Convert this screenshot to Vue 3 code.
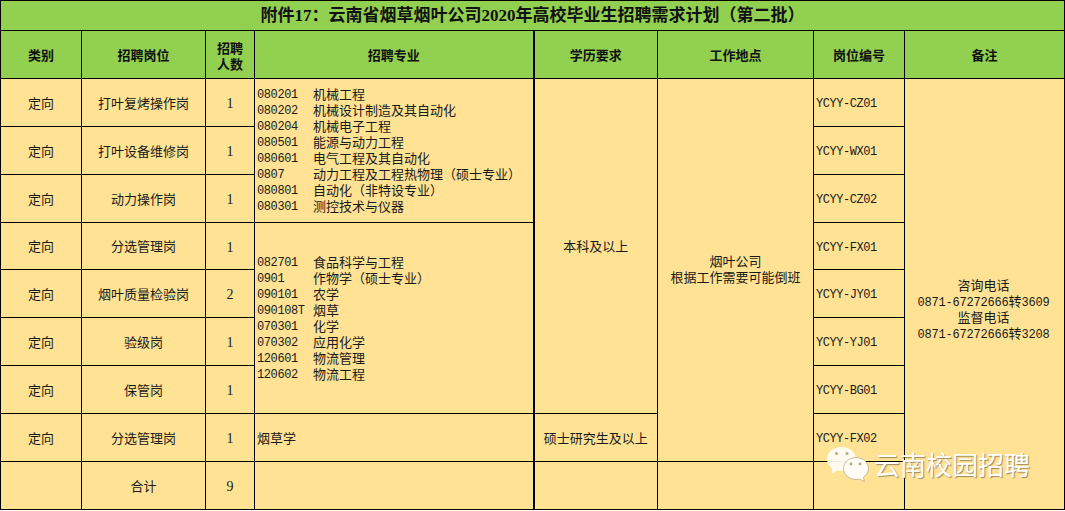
<script setup>
const rows = [
  { pos: '打叶复烤操作岗', n: '1', code: 'YCYY-CZ01' },
  { pos: '打叶设备维修岗', n: '1', code: 'YCYY-WX01' },
  { pos: '动力操作岗', n: '1', code: 'YCYY-CZ02' },
  { pos: '分选管理岗', n: '1', code: 'YCYY-FX01' },
  { pos: '烟叶质量检验岗', n: '2', code: 'YCYY-JY01' },
  { pos: '验级岗', n: '1', code: 'YCYY-YJ01' },
  { pos: '保管岗', n: '1', code: 'YCYY-BG01' },
  { pos: '分选管理岗', n: '1', code: 'YCYY-FX02' }
]
const heights = [48, 48, 48, 47, 48, 48, 48, 48]
const majorsA = [
  ['080201', '机械工程'], ['080202', '机械设计制造及其自动化'], ['080204', '机械电子工程'],
  ['080501', '能源与动力工程'], ['080601', '电气工程及其自动化'], ['0807', '动力工程及工程热物理（硕士专业）'],
  ['080801', '自动化（非特设专业）'], ['080301', '测控技术与仪器']
]
const majorsB = [
  ['082701', '食品科学与工程'], ['0901', '作物学（硕士专业）'], ['090101', '农学'], ['090108T', '烟草'],
  ['070301', '化学'], ['070302', '应用化学'], ['120601', '物流管理'], ['120602', '物流工程']
]
const cols = [81, 124, 49, 279, 124, 156, 91, 160]
</script>

<template>
  <div class="page">
    <table class="plan">
      <colgroup><col v-for="(w, i) in cols" :key="i" :style="{ width: w + 'px' }" /></colgroup>
      <tbody>
        <tr class="title-row"><th colspan="8" class="title">附件17：云南省烟草烟叶公司2020年高校毕业生招聘需求计划（第二批）</th></tr>
        <tr class="head-row">
          <th>类别</th><th>招聘岗位</th><th class="two">招聘<br />人数</th><th>招聘专业</th>
          <th class="thick">学历要求</th><th>工作地点</th><th>岗位编号</th><th>备注</th>
        </tr>
        <tr v-for="(r, i) in rows" :key="r.code" :style="{ height: heights[i] + 'px' }">
          <td>定向</td>
          <td>{{ r.pos }}</td>
          <td class="num">{{ r.n }}</td>
          <td v-if="i === 0" rowspan="3" class="majors first">
            <div v-for="m in majorsA" :key="m[0]" class="major"><span class="mcode">{{ m[0] }}</span><span>{{ m[1] }}</span></div>
          </td>
          <td v-else-if="i === 3" rowspan="4" class="majors">
            <div v-for="m in majorsB" :key="m[0]" class="major"><span class="mcode">{{ m[0] }}</span><span>{{ m[1] }}</span></div>
          </td>
          <td v-else-if="i === 7" class="left">烟草学</td>
          <td v-if="i === 0" rowspan="7" class="thick">本科及以上</td>
          <td v-else-if="i === 7" class="thick">硕士研究生及以上</td>
          <td v-if="i === 0" rowspan="8" class="place">烟叶公司<br />根据工作需要可能倒班</td>
          <td class="code">{{ r.code }}</td>
          <td v-if="i === 0" rowspan="9" class="note">
            <div>咨询电话</div>
            <div class="phone"><span class="mono">0871-67272666</span>转<span class="mono">3609</span></div>
            <div>监督电话</div>
            <div class="phone"><span class="mono">0871-67272666</span>转<span class="mono">3208</span></div>
          </td>
        </tr>
        <tr class="total">
          <td></td><td>合计</td><td class="num">9</td><td></td><td class="thick"></td><td></td><td></td>
        </tr>
      </tbody>
    </table>
    <div class="mark">
      <svg class="wechat" width="43" height="36" viewBox="0 0 43 36">
        <path d="M15.500 1C7.500 1 1 6.400 1 13c0 3.700 2 7 5.200 9.200L5.500 27.500l6-3c1.300.3 2.600.5 4 .5 8 0 14.500-5.400 14.500-12S23.500 1 15.500 1z" fill="#fffdf6" fill-opacity=".93" />
        <path d="M30 11.500c-6.900 0-12.500 4.900-12.500 11s5.600 11 12.500 11c1.200 0 2.400-.2 3.500-.5l4.800 2.600-.8-4.700c3-2 5-5 5-8.400 0-6.100-5.600-11-12.500-11z" fill="#fffdf6" stroke="#b9ab85" stroke-width=".8" />
        <circle cx="10.500" cy="7.500" r="1.500" fill="#b5a988" /><circle cx="21" cy="7.500" r="1.500" fill="#b5a988" />
        <circle cx="25" cy="18" r="1.400" fill="#b5a988" /><circle cx="34" cy="18" r="1.400" fill="#b5a988" />
      </svg>
      <span class="mark-text">云南校园招聘</span>
    </div>
  </div>
</template>

<style>
html, body { background: #fff; margin: 0; }
</style>

<style scoped>
.page { position: relative; width: 1065px; height: 511px; overflow: hidden; }
.plan {
  table-layout: fixed;
  width: 1064px;
  border-collapse: collapse;
  font-family: "Noto Sans CJK SC", "Liberation Serif", serif;
  font-size: 13px;
  line-height: 16px;
  color: #1a1a1a;
  background: #ffe294;
}
.plan th, .plan td { border: 1px solid #000; padding: 0; text-align: center; vertical-align: middle; overflow: hidden; }
.plan th { background: #92d050; font-weight: 700; color: #111; }
.title-row { height: 30px; }
.plan .title { font-size: 17px; white-space: nowrap; font-family: "Liberation Serif", "Noto Sans CJK SC", serif; }
.head-row { height: 48px; }
.plan .two { padding-top: 2px; }
.total { height: 48px; }
.plan .thick { border-left: 2px solid #000; }
.plan .num { font-family: "Liberation Serif", serif; font-size: 14px; padding-top: 3px; }
.plan .majors { text-align: left; padding: 0 0 0 2px; }
.plan .majors.first { padding-bottom: 2px; }
.major { display: flex; height: 16px; }
.mcode { width: 56px; padding-top: 1px; font-family: "Liberation Mono", monospace; font-size: 12px; letter-spacing: -.4px; }
.plan .place { padding-bottom: 2px; }
.plan .left { text-align: left; padding-left: 2px; }
.plan .code { text-align: left; padding: 3px 0 0 2px; font-family: "Liberation Mono", monospace; font-size: 12px; letter-spacing: -.45px; }
.plan .note { padding: 30px 2px 0 0; }
.phone { height: 16px; }
.mono { font-family: "Liberation Mono", monospace; font-size: 12px; letter-spacing: -.2px; }
.mark { position: absolute; left: 826px; top: 446px; display: flex; align-items: center; gap: 5px; }
.wechat { display: block; }
.mark-text {
  font-family: "Noto Sans CJK SC", sans-serif;
  font-size: 26px;
  line-height: 36px;
  color: #fff;
  text-shadow: 1px 1px 1px rgba(90, 80, 60, .6);
}
</style>
